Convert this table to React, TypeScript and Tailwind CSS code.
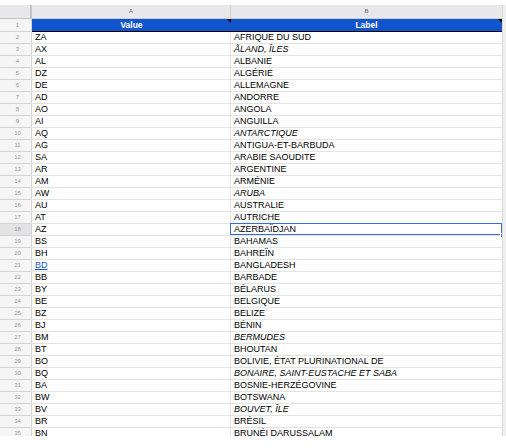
import React from 'react';

type Row = { code: string; label: string; italic?: boolean; link?: boolean };

const rows: Row[] = [
  { code: 'ZA', label: 'AFRIQUE DU SUD' },
  { code: 'AX', label: 'ÅLAND, ÎLES', italic: true },
  { code: 'AL', label: 'ALBANIE' },
  { code: 'DZ', label: 'ALGÉRIE' },
  { code: 'DE', label: 'ALLEMAGNE' },
  { code: 'AD', label: 'ANDORRE' },
  { code: 'AO', label: 'ANGOLA' },
  { code: 'AI', label: 'ANGUILLA' },
  { code: 'AQ', label: 'ANTARCTIQUE', italic: true },
  { code: 'AG', label: 'ANTIGUA-ET-BARBUDA' },
  { code: 'SA', label: 'ARABIE SAOUDITE' },
  { code: 'AR', label: 'ARGENTINE' },
  { code: 'AM', label: 'ARMÉNIE' },
  { code: 'AW', label: 'ARUBA', italic: true },
  { code: 'AU', label: 'AUSTRALIE' },
  { code: 'AT', label: 'AUTRICHE' },
  { code: 'AZ', label: 'AZERBAÏDJAN' },
  { code: 'BS', label: 'BAHAMAS' },
  { code: 'BH', label: 'BAHREÏN' },
  { code: 'BD', label: 'BANGLADESH', link: true },
  { code: 'BB', label: 'BARBADE' },
  { code: 'BY', label: 'BÉLARUS' },
  { code: 'BE', label: 'BELGIQUE' },
  { code: 'BZ', label: 'BELIZE' },
  { code: 'BJ', label: 'BÉNIN' },
  { code: 'BM', label: 'BERMUDES', italic: true },
  { code: 'BT', label: 'BHOUTAN' },
  { code: 'BO', label: 'BOLIVIE, ÉTAT PLURINATIONAL DE' },
  { code: 'BQ', label: 'BONAIRE, SAINT-EUSTACHE ET SABA', italic: true },
  { code: 'BA', label: 'BOSNIE-HERZÉGOVINE' },
  { code: 'BW', label: 'BOTSWANA' },
  { code: 'BV', label: 'BOUVET, ÎLE', italic: true },
  { code: 'BR', label: 'BRÉSIL' },
  { code: 'BN', label: 'BRUNÉI DARUSSALAM' },
];

const SELECTED = 18;

const RowHeader: React.FC<{ n: number }> = ({ n }) => (
  <div
    className={`w-[32px] shrink-0 h-full flex items-center justify-center pl-[4px] text-[6px] text-[#9a9a9a] border-r border-b border-[#d4d4d4] ${
      n === SELECTED ? 'bg-[#e3e3e5]' : 'bg-[#f5f5f6]'
    }`}
  >
    {n}
  </div>
);

const App: React.FC = () => {
  return (
    <div
      className="w-[506px] h-[448px] bg-white overflow-hidden pt-[5px]"
      style={{ fontFamily: '"Liberation Sans", Arial, sans-serif' }}
    >
      <div className="flex h-[431px]">
        <div className="w-[502px] flex flex-col overflow-hidden">
          {/* column letters */}
          <div className="flex h-[14px] shrink-0 bg-[#e8e8ea] text-[6px] text-[#6b6b6b]">
            <div className="w-[32px] shrink-0 border-r-[2px] border-b border-[#c4c4c6]" />
            <div className="w-[199px] shrink-0 flex items-center justify-center border-r border-b border-[#cfcfd1]">
              A
            </div>
            <div className="flex-1 flex items-center justify-center border-b border-[#cfcfd1]">B</div>
          </div>

          {/* header row */}
          <div className="flex h-[13px] shrink-0">
            <RowHeader n={1} />
            <div className="relative w-[199px] shrink-0 bg-[#1155cc] border-b border-black flex items-center justify-center text-white font-bold text-[8.5px]">
              Value
              <div className="absolute top-0 right-0 w-0 h-0 border-l-[4px] border-l-transparent border-t-[4px] border-t-black" />
            </div>
            <div className="relative flex-1 bg-[#1155cc] border-b border-black flex items-center justify-center text-white font-bold text-[8.5px]">
              Label
              <div className="absolute top-0 right-0 w-0 h-0 border-l-[4px] border-l-transparent border-t-[4px] border-t-black" />
            </div>
          </div>

          {rows.map((r, i) => {
            const n = i + 2;
            return (
              <div key={r.code} className="flex h-[12px] shrink-0 text-[9px] text-black">
                <RowHeader n={n} />
                <div
                  className={`w-[199px] shrink-0 flex items-center pl-[3px] border-r border-b border-[#e3e3e3] ${
                    r.link ? 'text-[#1155cc] underline' : ''
                  }`}
                >
                  {r.code}
                </div>
                <div
                  className={`relative flex-1 flex items-center pl-[3px] border-b border-[#e3e3e3] whitespace-nowrap ${
                    r.italic ? 'italic' : ''
                  }`}
                >
                  {r.label}
                  {n === SELECTED && (
                    <>
                      <div className="absolute -top-[1px] -left-[1px] right-0 bottom-0 border-[1.5px] border-[#2f6fe0]" />
                      <div className="absolute -bottom-[3px] -right-[3px] w-[5px] h-[5px] bg-[#2f6fe0] border border-white" />
                    </>
                  )}
                </div>
              </div>
            );
          })}
        </div>
        <div className="flex-1 bg-[#efefef] border-l border-[#dcdcdc]" />
      </div>
    </div>
  );
};

export default App;
